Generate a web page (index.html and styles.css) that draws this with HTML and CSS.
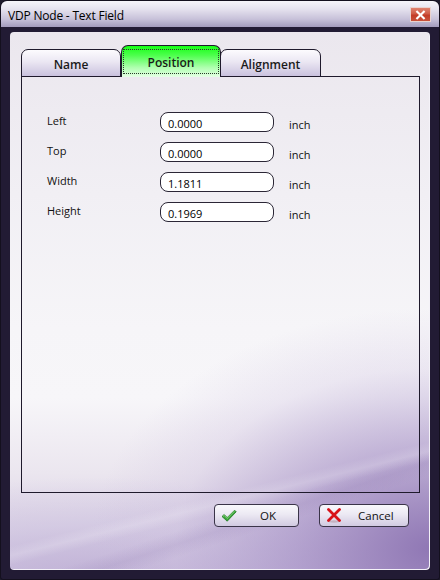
FILE: index.html
```html
<!DOCTYPE html>
<html>
<head>
<meta charset="utf-8">
<link rel="stylesheet" href="styles.css">
</head>
<body>
<div class="window">
  <div class="titlebar">
    <span class="title">VDP Node - Text Field</span>
    <div class="close">
      <svg width="20" height="14" viewBox="0 0 20 14"><path d="M6.5 3.5 L13.5 10.5 M13.5 3.5 L6.5 10.5" stroke="#fff" stroke-width="2.2" stroke-linecap="square"/></svg>
    </div>
  </div>
  <div class="frame">
    <div class="panel">
      <div class="tabs">
        <div class="tab">Name</div>
        <div class="tab active"><span class="focus">Position</span></div>
        <div class="tab last">Alignment</div>
      </div>
      <div class="page">
        <div class="form">
          <div class="row"><span class="label">Left</span><span class="field">0.0000</span><span class="unit">inch</span></div>
          <div class="row"><span class="label">Top</span><span class="field">0.0000</span><span class="unit">inch</span></div>
          <div class="row"><span class="label">Width</span><span class="field">1.1811</span><span class="unit">inch</span></div>
          <div class="row"><span class="label">Height</span><span class="field">0.1969</span><span class="unit">inch</span></div>
        </div>
      </div>
      <div class="buttons">
        <div class="btn ok">
          <svg class="icon" width="16" height="14" viewBox="0 0 16 14"><path d="M1 7.5 L3.2 5.6 L6.2 8.6 L13.6 1.2 L15.2 2.8 L6.2 12.2 Z" fill="#3aa53a" stroke="#1f7a22" stroke-width="0.8" stroke-linejoin="round"/><path d="M2 7.4 L3.2 6.4 L6.2 9.4 L13.6 2" fill="none" stroke="#9be08f" stroke-width="0.8"/></svg>
          <span class="btext">OK</span>
        </div>
        <div class="btn cancel">
          <svg class="icon" width="16" height="15" viewBox="0 0 16 15"><ellipse cx="8" cy="13.5" rx="6" ry="1.2" fill="#b9a3b0" opacity="0.7"/><path d="M2.5 1.5 L13.5 12.5 M13.5 1.5 L2.5 12.5" stroke="#d8121a" stroke-width="2.8" stroke-linecap="round"/></svg>
          <span class="btext">Cancel</span>
        </div>
      </div>
    </div>
  </div>
</div>
</body>
</html>
```
FILE: styles.css
```css
* { box-sizing: border-box; }
html, body { margin: 0; padding: 0; background: #1e1a2c; }
body { width: 440px; height: 580px; overflow: hidden; font-family: "Open Sans", "Noto Sans", sans-serif; color: #111; }

.window {
  width: 440px;
  height: 580px;
  display: flex;
  flex-direction: column;
  background: #221b34;
  border: 1px solid #14101e;
  border-radius: 7px 7px 3px 3px;
  overflow: hidden;
}

.titlebar {
  height: 26px;
  flex: none;
  display: flex;
  align-items: flex-start;
  padding: 0 8px 0 7px;
  background: linear-gradient(to bottom, #f6f5fa 0%, #e6e3ef 30%, #c7c1d9 70%, #a39bbd 100%);
}
.title {
  font-size: 12px;
  line-height: 14px;
  margin-top: 8px;
  color: #000;
  letter-spacing: -0.2px;
}
.close {
  margin-left: auto;
  margin-top: 6px;
  width: 21px;
  height: 15px;
  border: 1px solid #e9d2cf;
  background: linear-gradient(to bottom, #e0826f 0%, #cf5a45 45%, #c33b27 55%, #c9523b 100%);
  display: flex;
  align-items: center;
  justify-content: center;
}
.close svg { display: block; }

.frame {
  flex: 1;
  padding: 5px 9px 9px 9px;
  display: flex;
}

.panel {
  flex: 1;
  border-radius: 4px;
  padding: 13px 10px 0 11px;
  display: flex;
  flex-direction: column;
  box-shadow: inset -1px -1px 0 #f4f2f8;
  background:
    linear-gradient(166deg, transparent 0%, transparent 80%, rgba(255,255,255,0.18) 81.5%, transparent 83%, transparent 100%),
    linear-gradient(162deg, transparent 0%, transparent 82%, rgba(120,95,160,0.12) 84%, transparent 86%, transparent 100%),
    radial-gradient(ellipse 340px 240px at 100% 96%, rgba(140,115,178,0.95) 0%, rgba(160,138,195,0.6) 40%, rgba(200,185,220,0.25) 75%, rgba(255,255,255,0) 100%),
    radial-gradient(ellipse 300px 120px at 20% 105%, rgba(185,168,210,0.8) 0%, rgba(200,188,222,0.4) 60%, rgba(255,255,255,0) 100%),
    linear-gradient(to bottom, #ebe7ee 0%, #f1eff4 30%, #f6f5f8 55%, #f7f6f9 68%, #ebe6ef 82%, #cfc4de 100%);
}

.tabs {
  display: flex;
  align-items: flex-end;
  height: 32px;
  margin-bottom: -1px;
  position: relative;
  z-index: 1;
}
.tab {
  width: 100px;
  height: 28px;
  border: 1px solid #1f1a2c;
  border-radius: 7px 7px 0 0;
  background: linear-gradient(to bottom, #fcfbfe 0%, #ebe7f3 45%, #cac2de 100%);
  display: flex;
  align-items: center;
  justify-content: center;
  font-size: 12px;
  font-weight: 600;
  color: #1a1a1a;
  padding-top: 3px;
}
.tab.active {
  height: 32px;
  width: 100px;
  border-bottom: none;
  background: linear-gradient(to bottom, #16ff16 0%, #4dff4d 30%, #b0ffb0 70%, #e6ffe6 100%);
  padding: 3px 1px 3px 1px;
  align-items: stretch;
}
.tab.last { width: 101px; margin-left: -1px; }
.focus {
  flex: 1;
  border: 1px dotted #2a3a2a;
  display: flex;
  align-items: center;
  justify-content: center;
  padding-top: 1px;
}

.page {
  width: 399px;
  height: 417px;
  border: 1px solid #1f1a2c;
  flex: none;
}
.form {
  padding: 35px 0 0 25px;
  display: flex;
  flex-direction: column;
  gap: 10px;
}
.row {
  display: flex;
  align-items: center;
  height: 20px;
}
.label {
  width: 113px;
  font-size: 11px;
  margin-bottom: 3px;
  color: #111;
}
.field {
  width: 114px;
  height: 20px;
  border: 1px solid #2b2636;
  border-radius: 8px;
  background: #fff;
  font-size: 11px;
  line-height: 18px;
  padding: 2px 0 0 7px;
  color: #000;
}
.unit {
  margin-left: 15px;
  font-size: 11px;
  margin-top: 4px;
  color: #111;
}

.buttons {
  display: flex;
  justify-content: flex-end;
  gap: 20px;
  margin-top: 11px;
  padding-right: 11px;
}
.btn {
  height: 23px;
  border: 1px solid #3a3448;
  border-radius: 4px;
  background: linear-gradient(to bottom, #f9f8fc 0%, #ece9f3 45%, #d1cae1 100%);
  display: flex;
  align-items: center;
  font-size: 11.5px;
  color: #111;
}
.btn.ok { width: 85px; padding-left: 6px; }
.btn.cancel { width: 90px; padding-left: 6px; }
.icon { display: block; flex: none; }
.btn.ok .btext { margin-left: 23px; }
.btn.cancel .btext { margin-left: 16px; }
```
